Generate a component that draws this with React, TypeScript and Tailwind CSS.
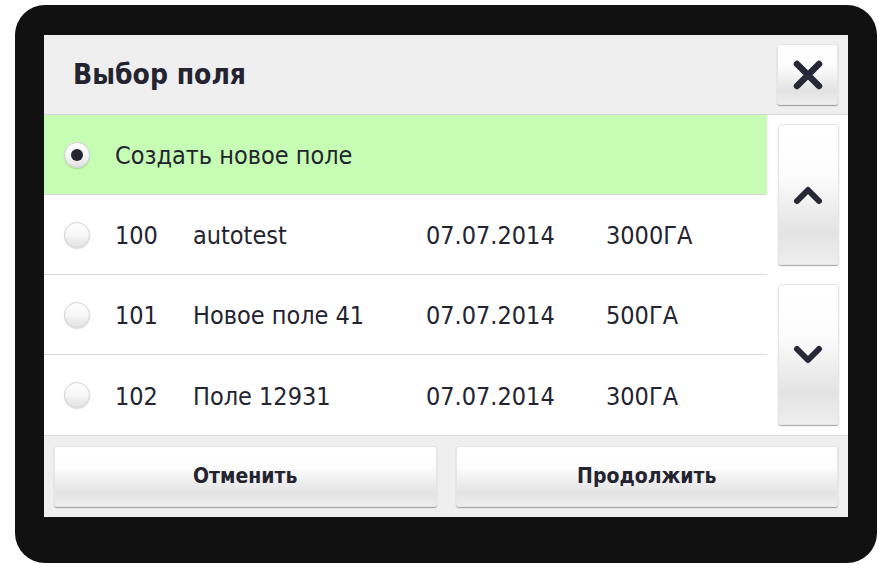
import React from "react";

interface FieldRow
{
    id: number;
    name: string;
    date: string;
    area: string;
}

const rows: FieldRow[] = [
    {id: 100, name: "autotest", date: "07.07.2014", area: "3000ГА"},
    {id: 101, name: "Новое поле 41", date: "07.07.2014", area: "500ГА"},
    {id: 102, name: "Поле 12931", date: "07.07.2014", area: "300ГА"},
];

const font = {fontFamily: '"DejaVu Sans Condensed", "DejaVu Sans", Verdana, sans-serif'};

const btn = "rounded-[3px] bg-[linear-gradient(to_bottom,#ffffff_0%,#fdfdfd_35%,#e3e3e3_78%,#eeeeee_100%)] shadow-[0_1px_1px_rgba(0,0,0,0.35)] border border-[#e6e6e6] flex items-center justify-center";

const Radio: React.FC<{checked?: boolean}> = ({checked}) =>
{
    return(
        <span className="w-[26px] h-[26px] shrink-0 rounded-full border border-[#d2d2d2] bg-[linear-gradient(to_bottom,#ffffff_0%,#f7f7f7_50%,#e2e2e2_100%)] shadow-[0_1px_1px_rgba(0,0,0,0.15)] flex items-center justify-center">
            {checked && <span className="w-[12px] h-[12px] rounded-full bg-[#242531]"/>}
        </span>
    );
};

const Chevron: React.FC<{up?: boolean}> = ({up}) =>
{
    return(
        <svg width="30" height="20" viewBox="0 0 30 20">
            <path d={up ? "M4 16 L15 5 L26 16" : "M4 4 L15 15 L26 4"} fill="none" stroke="#262837" strokeWidth="6" strokeLinecap="round" strokeLinejoin="round"/>
        </svg>
    );
};

export default function App()
{
    return(
        <div className="w-[878px] h-[564px] bg-white pl-[15px] pt-[5px]" style={font}>
            <div className="w-[862px] h-[558px] bg-[#111111] rounded-[30px] pl-[29px] pt-[30px]">
                <div className="w-[804px] h-[482px] bg-[#efefef] flex flex-col text-[#23242f]">
                    <div className="h-[80px] flex items-center justify-between border-b border-[#d9d9d9] pl-[29px] pr-[10px]">
                        <h2 className="text-[28px] font-bold">Выбор поля</h2>
                        <button className={`${btn} w-[61px] h-[61px]`}>
                            <svg width="30" height="30" viewBox="0 0 30 30">
                                <path d="M4 4 L26 26 M26 4 L4 26" stroke="#262837" strokeWidth="6.5" strokeLinecap="round"/>
                            </svg>
                        </button>
                    </div>
                    <div className="flex bg-white h-[321px] border-b border-[#d9d9d9]">
                        <div className="w-[723px] flex flex-col text-[25px]">
                            <div className="h-[80px] bg-[#c7fcb4] flex items-center pl-[20px] gap-[25px] border-b border-[#d6d6d6]">
                                <Radio checked/>
                                <span className="pt-[3px]">Создать новое поле</span>
                            </div>
                            {rows.map((r, i) => (
                                <div key={r.id} className={`h-[80px] flex items-center pl-[20px] ${i < rows.length - 1 ? "border-b border-[#d6d6d6]" : ""}`}>
                                    <Radio/>
                                    <span className="ml-[25px] w-[78px] pt-[3px]">{r.id}</span>
                                    <span className="w-[233px] pt-[3px]">{r.name}</span>
                                    <span className="w-[180px] pt-[3px]">{r.date}</span>
                                    <span className="pt-[3px]">{r.area}</span>
                                </div>
                            ))}
                        </div>
                        <div className="flex-1 flex flex-col items-center pt-[9px] gap-[19px] pl-[1px]">
                            <button className={`${btn} w-[61px] h-[141px]`}><Chevron up/></button>
                            <button className={`${btn} w-[61px] h-[141px]`}><Chevron/></button>
                        </div>
                    </div>
                    <div className="flex-1 flex items-center gap-[19px] px-[10px]">
                        <button className={`${btn} flex-1 h-[61px] text-[21px] font-bold`}>Отменить</button>
                        <button className={`${btn} flex-1 h-[61px] text-[21px] font-bold`}>Продолжить</button>
                    </div>
                </div>
            </div>
        </div>
    );
}
